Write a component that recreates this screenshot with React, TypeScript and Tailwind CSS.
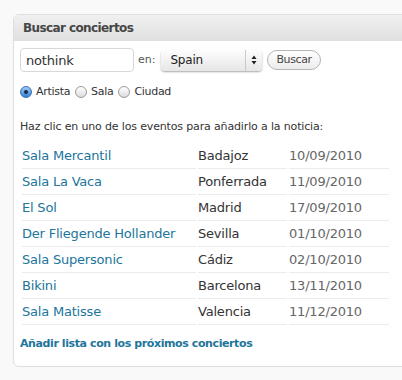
import { useState } from 'react';

type Evento = { sala: string; ciudad: string; fecha: string };

const eventos: Evento[] = [
  { sala: 'Sala Mercantil', ciudad: 'Badajoz', fecha: '10/09/2010' },
  { sala: 'Sala La Vaca', ciudad: 'Ponferrada', fecha: '11/09/2010' },
  { sala: 'El Sol', ciudad: 'Madrid', fecha: '17/09/2010' },
  { sala: 'Der Fliegende Hollander', ciudad: 'Sevilla', fecha: '01/10/2010' },
  { sala: 'Sala Supersonic', ciudad: 'Cádiz', fecha: '02/10/2010' },
  { sala: 'Bikini', ciudad: 'Barcelona', fecha: '13/11/2010' },
  { sala: 'Sala Matisse', ciudad: 'Valencia', fecha: '11/12/2010' },
];

function Radio({ checked, label, onClick }: { checked: boolean; label: string; onClick: () => void }) {
  return (
    <button onClick={onClick} className="flex items-center gap-[4px]">
      {checked ? (
        <span className="w-[12px] h-[12px] rounded-full bg-gradient-to-b from-[#9fcbf5] to-[#2f7fd8] border border-[#3b6fb0] flex items-center justify-center">
          <span className="w-[4px] h-[4px] rounded-full bg-[#1b2a40]" />
        </span>
      ) : (
        <span className="w-[12px] h-[12px] rounded-full bg-gradient-to-b from-[#ffffff] to-[#dcdcdc] border border-[#9a9a9a]" />
      )}
      <span className="text-[11px] tracking-[-0.3px] text-[#333]">{label}</span>
    </button>
  );
}

export default function App() {
  const [tipo, setTipo] = useState<'artista' | 'sala' | 'ciudad'>('artista');

  return (
    <div
      className="w-[402px] h-[380px] overflow-hidden bg-[#f9f9f9] pt-[14px] pl-[13px]"
      style={{ fontFamily: '"DejaVu Sans", "Noto Sans", sans-serif' }}
    >
      <div className="w-[400px] bg-white border border-[#dfdfdf] rounded-l-[6px] overflow-hidden">
        {/* Header */}
        <div className="h-[26px] bg-gradient-to-b from-[#f0f0f0] to-[#e0e0e0] border-b border-[#dfdfdf] px-[9px] flex items-center">
          <h3 className="text-[12px] font-bold tracking-[-0.6px] text-[#464646]">Buscar conciertos</h3>
        </div>

        <div className="pl-[6px] pt-[7px] pb-[13px]">
          {/* Search form */}
          <div className="flex items-center">
            <input
              defaultValue="nothink"
              className="w-[114px] h-[24px] border border-[#d8d8d8] rounded-[4px] px-[5px] text-[13px] tracking-[-0.2px] text-[#333] outline-none"
            />
            <span className="ml-[4px] text-[11px] text-[#555]">en:</span>
            <div className="ml-[6px] w-[101px] h-[21px] rounded-[4px] bg-gradient-to-b from-[#fdfdfd] to-[#e6e6e6] shadow-[0_1px_2px_rgba(0,0,0,0.35)] flex items-center">
              <span className="flex-1 pl-[9px] text-[12px] tracking-[-0.2px] text-[#222]">Spain</span>
              <span className="w-[17px] h-full border-l border-[#c8c8c8] flex items-center justify-center">
                <svg width="6" height="10" viewBox="0 0 6 10">
                  <path d="M3 0.5 L5.5 4 L0.5 4 Z" fill="#222" />
                  <path d="M3 9.5 L5.5 6 L0.5 6 Z" fill="#222" />
                </svg>
              </span>
            </div>
            <button className="ml-[5px] h-[20px] px-[8px] rounded-full border border-[#b5b5b5] bg-gradient-to-b from-[#ffffff] to-[#ececec] text-[11px] tracking-[-0.4px] text-[#464646]">
              Buscar
            </button>
          </div>

          {/* Radios */}
          <div className="flex items-center gap-[5px] mt-[12px]">
            <Radio checked={tipo === 'artista'} label="Artista" onClick={() => setTipo('artista')} />
            <Radio checked={tipo === 'sala'} label="Sala" onClick={() => setTipo('sala')} />
            <Radio checked={tipo === 'ciudad'} label="Ciudad" onClick={() => setTipo('ciudad')} />
          </div>

          <p className="mt-[18px] text-[11px] tracking-[-0.15px] text-[#333]">
            Haz clic en uno de los eventos para añadirlo a la noticia:
          </p>

          {/* Events */}
          <div className="mt-[8px] ml-[2px] grid grid-cols-[174px_89px_100px] gap-x-[2px]">
            {eventos.map((e) => (
              <div key={e.sala + e.fecha} className="contents">
                <a href="#" className="h-[26px] flex items-center border-b border-[#ebebeb] text-[13px] tracking-[-0.2px] text-[#21759b]">
                  {e.sala}
                </a>
                <span className="h-[26px] flex items-center border-b border-[#ebebeb] text-[13px] tracking-[-0.2px] text-[#333]">
                  {e.ciudad}
                </span>
                <span className="h-[26px] flex items-center border-b border-[#ebebeb] text-[13px] tracking-[-0.2px] text-[#666]">
                  {e.fecha}
                </span>
              </div>
            ))}
          </div>

          <a href="#" className="block mt-[11px] text-[11px] font-bold tracking-[-0.4px] text-[#21759b]">
            Añadir lista con los próximos conciertos
          </a>
        </div>
      </div>
    </div>
  );
}
